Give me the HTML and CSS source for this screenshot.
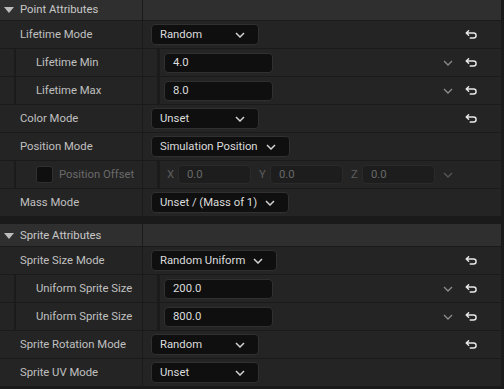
FILE: index.html
```html
<!DOCTYPE html>
<html>
<head>
<meta charset="utf-8">
<link rel="stylesheet" href="styles.css">
</head>
<body>
<div class="panel">
  <section class="cat">
    <div class="cat-head">
      <div class="name"><span class="tri"></span>Point Attributes</div>
      <div class="val"></div>
    </div>
    <div class="row">
      <div class="name">Lifetime Mode</div>
      <div class="val">
        <div class="combo">Random<svg class="chev" viewBox="0 0 10 6"><path d="M1 1 L5 5 L9 1"/></svg></div>
        <div class="acts"><span class="slot"></span><svg class="reset" viewBox="0 0 12 9"><path d="M3.6 0.7 L1.2 3 L3.6 5.3 M1.2 3 H8.6 A2.5 2.5 0 0 1 8.6 8 H5.2"/></svg></div>
      </div>
    </div>
    <div class="row child">
      <div class="name"><span class="indent"></span>Lifetime Min</div>
      <div class="val">
        <span class="vindent"></span>
        <div class="num">4.0</div>
        <div class="acts"><svg class="chev out" viewBox="0 0 10 6"><path d="M1 1 L5 5 L9 1"/></svg><svg class="reset" viewBox="0 0 12 9"><path d="M3.6 0.7 L1.2 3 L3.6 5.3 M1.2 3 H8.6 A2.5 2.5 0 0 1 8.6 8 H5.2"/></svg></div>
      </div>
    </div>
    <div class="row child">
      <div class="name"><span class="indent"></span>Lifetime Max</div>
      <div class="val">
        <span class="vindent"></span>
        <div class="num">8.0</div>
        <div class="acts"><svg class="chev out" viewBox="0 0 10 6"><path d="M1 1 L5 5 L9 1"/></svg><svg class="reset" viewBox="0 0 12 9"><path d="M3.6 0.7 L1.2 3 L3.6 5.3 M1.2 3 H8.6 A2.5 2.5 0 0 1 8.6 8 H5.2"/></svg></div>
      </div>
    </div>
    <div class="row">
      <div class="name">Color Mode</div>
      <div class="val">
        <div class="combo">Unset<svg class="chev" viewBox="0 0 10 6"><path d="M1 1 L5 5 L9 1"/></svg></div>
        <div class="acts"><span class="slot"></span><svg class="reset" viewBox="0 0 12 9"><path d="M3.6 0.7 L1.2 3 L3.6 5.3 M1.2 3 H8.6 A2.5 2.5 0 0 1 8.6 8 H5.2"/></svg></div>
      </div>
    </div>
    <div class="row">
      <div class="name">Position Mode</div>
      <div class="val">
        <div class="combo">Simulation Position<svg class="chev" viewBox="0 0 10 6"><path d="M1 1 L5 5 L9 1"/></svg></div>
      </div>
    </div>
    <div class="row child disabled">
      <div class="name"><span class="indent"></span><span class="check"></span>Position Offset</div>
      <div class="val">
        <span class="vindent"></span>
        <div class="vec">
          <span class="axis">X</span><div class="vnum">0.0</div>
          <span class="axis">Y</span><div class="vnum">0.0</div>
          <span class="axis">Z</span><div class="vnum">0.0</div>
        </div>
        <div class="acts"><svg class="chev out dim" viewBox="0 0 10 6"><path d="M1 1 L5 5 L9 1"/></svg><span class="rslot"></span></div>
      </div>
    </div>
    <div class="row">
      <div class="name">Mass Mode</div>
      <div class="val">
        <div class="combo">Unset / (Mass of 1)<svg class="chev" viewBox="0 0 10 6"><path d="M1 1 L5 5 L9 1"/></svg></div>
      </div>
    </div>
  </section>

  <section class="cat">
    <div class="cat-head">
      <div class="name"><span class="tri"></span>Sprite Attributes</div>
      <div class="val"></div>
    </div>
    <div class="row">
      <div class="name">Sprite Size Mode</div>
      <div class="val">
        <div class="combo">Random Uniform<svg class="chev" viewBox="0 0 10 6"><path d="M1 1 L5 5 L9 1"/></svg></div>
        <div class="acts"><span class="slot"></span><svg class="reset" viewBox="0 0 12 9"><path d="M3.6 0.7 L1.2 3 L3.6 5.3 M1.2 3 H8.6 A2.5 2.5 0 0 1 8.6 8 H5.2"/></svg></div>
      </div>
    </div>
    <div class="row child">
      <div class="name"><span class="indent"></span>Uniform Sprite Size</div>
      <div class="val">
        <span class="vindent"></span>
        <div class="num">200.0</div>
        <div class="acts"><svg class="chev out" viewBox="0 0 10 6"><path d="M1 1 L5 5 L9 1"/></svg><svg class="reset" viewBox="0 0 12 9"><path d="M3.6 0.7 L1.2 3 L3.6 5.3 M1.2 3 H8.6 A2.5 2.5 0 0 1 8.6 8 H5.2"/></svg></div>
      </div>
    </div>
    <div class="row child">
      <div class="name"><span class="indent"></span>Uniform Sprite Size</div>
      <div class="val">
        <span class="vindent"></span>
        <div class="num">800.0</div>
        <div class="acts"><svg class="chev out" viewBox="0 0 10 6"><path d="M1 1 L5 5 L9 1"/></svg><svg class="reset" viewBox="0 0 12 9"><path d="M3.6 0.7 L1.2 3 L3.6 5.3 M1.2 3 H8.6 A2.5 2.5 0 0 1 8.6 8 H5.2"/></svg></div>
      </div>
    </div>
    <div class="row">
      <div class="name">Sprite Rotation Mode</div>
      <div class="val">
        <div class="combo">Random<svg class="chev" viewBox="0 0 10 6"><path d="M1 1 L5 5 L9 1"/></svg></div>
        <div class="acts"><span class="slot"></span><svg class="reset" viewBox="0 0 12 9"><path d="M3.6 0.7 L1.2 3 L3.6 5.3 M1.2 3 H8.6 A2.5 2.5 0 0 1 8.6 8 H5.2"/></svg></div>
      </div>
    </div>
    <div class="row">
      <div class="name">Sprite UV Mode</div>
      <div class="val">
        <div class="combo">Unset<svg class="chev" viewBox="0 0 10 6"><path d="M1 1 L5 5 L9 1"/></svg></div>
      </div>
    </div>
  </section>
</div>
</body>
</html>
```
FILE: styles.css
```css
* { box-sizing: border-box; }
html, body {
  margin: 0;
  padding: 0;
  background: #1a1a1a;
  overflow: hidden;
}
body {
  font-family: Roboto, "Noto Sans", sans-serif;
  font-size: 11.3px;
  color: #c0c0c0;
}
.panel {
  width: 501px;
  margin-top: -2px;
}
.cat {
  margin-bottom: 7px;
}
.cat-head, .row {
  display: flex;
  border-bottom: 1px solid #1a1a1a;
}
.cat-head {
  height: 23px;
  background: #2f2f2f;
}
.row {
  height: 28px;
  background: #242424;
}
.name {
  width: 143px;
  flex: none;
  border-right: 1px solid #1a1a1a;
  display: flex;
  align-items: center;
  padding-left: 20px;
  white-space: nowrap;
}
.cat-head .name {
  padding-left: 4px;
  color: #c8c8c8;
}
.tri {
  width: 0;
  height: 0;
  border-left: 5px solid transparent;
  border-right: 5px solid transparent;
  border-top: 6px solid #bdbdbd;
  margin-right: 6px;
  margin-top: 1px;
}
.val {
  flex: 1;
  display: flex;
  align-items: center;
  padding-left: 8px;
  min-width: 0;
}
.row.child .name {
  padding-left: 0;
}
.indent {
  width: 16px;
  align-self: stretch;
  border-right: 2px solid #1b1b1b;
  margin-right: 20px;
}
.row.child .val {
  padding-left: 0;
}
.vindent {
  width: 17px;
  align-self: stretch;
  border-right: 3px solid #1b1b1b;
  margin-right: 4px;
}
.combo {
  height: 21px;
  min-width: 108px;
  background: #0f0f0f;
  border: 1px solid #303030;
  border-radius: 4px;
  display: flex;
  align-items: center;
  justify-content: space-between;
  gap: 8px;
  padding: 0 13px 0 8px;
  color: #dcdcdc;
  white-space: nowrap;
}
.chev {
  width: 10px;
  height: 6px;
  flex: none;
  fill: none;
  stroke: #d2d2d2;
  stroke-width: 1.5;
}
.chev.out {
  stroke: #8c8c8c;
  stroke-width: 1.3;
}
.chev.dim {
  stroke: #565656;
}
.num {
  width: 109px;
  height: 20px;
  background: #0f0f0f;
  border: 1px solid #303030;
  border-radius: 4px;
  display: flex;
  align-items: center;
  padding-left: 8px;
  color: #dcdcdc;
}
.acts {
  margin-left: auto;
  display: flex;
  align-items: center;
  gap: 12px;
  padding-right: 24px;
}
.slot { width: 10px; height: 6px; }
.rslot { width: 12px; height: 9px; }
.reset {
  width: 12px;
  height: 9px;
  fill: none;
  stroke: #e8e8e8;
  stroke-width: 1.4;
  stroke-linecap: round;
  stroke-linejoin: round;
}
.check {
  width: 17px;
  height: 17px;
  background: #0f0f0f;
  border: 1px solid #303030;
  border-radius: 3px;
  margin-right: 6px;
}
.row.disabled .name {
  color: #6a6a6a;
}
.vec {
  display: flex;
  align-items: center;
}
.axis {
  width: 6px;
  margin-left: 8px;
  margin-right: 5px;
  color: #5c5c5c;
  text-align: center;
}
.axis:first-child { margin-left: 3px; }
.vnum {
  width: 73px;
  height: 19px;
  background: #1d1d1d;
  border: 1px solid #2a2a2a;
  border-radius: 4px;
  display: flex;
  align-items: center;
  padding-left: 8px;
  color: #6a6a6a;
}
```
